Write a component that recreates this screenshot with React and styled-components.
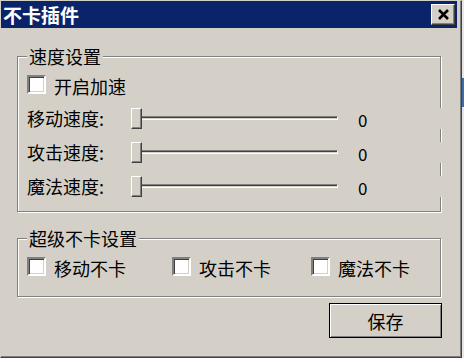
import React from "react";
import styled, { createGlobalStyle } from "styled-components";

const GlobalStyle = createGlobalStyle`
  html, body { margin: 0; padding: 0; }
  html {
    background: linear-gradient(to bottom, #e6e6e6 0, #e6e6e6 78px, #3a6ea5 78px, #3a6ea5 107px, #e6e6e6 107px);
  }
  body { font-family: "Noto Sans CJK SC", "Noto Sans", sans-serif; color: #000; }
`;

const Window = styled.div`
  width: 462px;
  height: 358px;
  box-sizing: border-box;
  background: #d4d0c8;
  border-top: 1px solid #d4d0c8;
  border-left: 1px solid #d4d0c8;
  border-right: 1px solid #404040;
  border-bottom: 1px solid #404040;
  box-shadow: inset -1px -1px 0 #808080;
  padding-right: 4px;
  display: flex;
  flex-direction: column;
`;

const TitleBar = styled.div`
  height: 27px;
  background: #0a246a;
  display: flex;
  align-items: center;
  justify-content: space-between;
  padding: 0 2px;
`;

const Title = styled.span`
  color: #fff;
  font-weight: 700;
  font-size: 19px;
  line-height: 27px;
`;

const CloseButton = styled.button`
  width: 24px;
  height: 21px;
  box-sizing: border-box;
  padding: 0;
  background: #d4d0c8;
  border: 1px solid;
  border-color: #fff #404040 #404040 #fff;
  box-shadow: inset -1px -1px 0 #808080;
  display: flex;
  align-items: center;
  justify-content: center;
`;

const Content = styled.div`
  padding: 28px 16px 0 16px;
  display: flex;
  flex-direction: column;
`;

const Group = styled.div`
  position: relative;
  border: 1px solid #808080;
  box-shadow: 1px 1px 0 #fff, inset 1px 1px 0 #fff;
  padding: 10px 0 ${(p) => p.$pb}px 9px;
  margin-top: ${(p) => p.$mt}px;
  display: flex;
  flex-direction: column;
`;

const Legend = styled.span`
  position: absolute;
  top: -10px;
  left: 9px;
  padding: 0 2px;
  background: #d4d0c8;
  font-size: 18px;
  line-height: 18px;
`;

const Row = styled.div`
  display: flex;
  align-items: center;
  height: 34px;
`;

const CheckItem = styled.label`
  display: flex;
  align-items: center;
  gap: 8px;
  width: ${(p) => (p.$w ? `${p.$w}px` : "auto")};
`;

const Box = styled.span`
  width: 19px;
  height: 19px;
  box-sizing: border-box;
  background: #fff;
  border: 2px solid;
  border-color: #808080 #fff #fff #808080;
  box-shadow: inset 1px 1px 0 #404040, inset -1px -1px 0 #d4d0c8;
`;

const Text = styled.span`
  font-size: 18px;
  line-height: 18px;
  padding-top: 3px;
`;

const FieldLabel = styled.span`
  width: 104px;
  font-size: 18px;
  line-height: 18px;
`;

const Slider = styled.div`
  flex: 1;
  height: 21px;
  margin-right: -3px;
  background: #d4d0c8;
  display: flex;
  align-items: center;
`;

const TrackArea = styled.div`
  position: relative;
  width: 207px;
  height: 21px;
  display: flex;
  align-items: center;
`;

const Track = styled.div`
  width: 100%;
  height: 4px;
  box-sizing: border-box;
  border-top: 1px solid #808080;
  border-left: 1px solid #808080;
  border-bottom: 1px solid #fff;
  border-right: 1px solid #fff;
  box-shadow: inset 0 1px 0 #404040;
`;

const Thumb = styled.div`
  position: absolute;
  left: 0;
  top: 0;
  width: 11px;
  height: 21px;
  box-sizing: border-box;
  background: #d4d0c8;
  border: 1px solid;
  border-color: #fff #404040 #404040 #fff;
  box-shadow: inset -1px -1px 0 #808080;
`;

const Value = styled.span`
  margin-left: 20px;
  font-size: 17px;
  line-height: 17px;
  padding-top: 3px;
`;

const Footer = styled.div`
  display: flex;
  justify-content: flex-end;
  margin-top: 6px;
  margin-right: -1px;
`;

const Button = styled.button`
  width: 113px;
  height: 35px;
  box-sizing: border-box;
  padding: 0;
  font-family: inherit;
  font-size: 18px;
  color: #000;
  background: #d4d0c8;
  border: 1px solid #000;
  box-shadow: inset 1px 1px 0 #fff, inset -1px -1px 0 #808080;
`;

const CloseIcon = () => (
  <svg width="13" height="11" viewBox="0 0 13 11">
    <path d="M2 1 L11 10 M11 1 L2 10" stroke="#000" strokeWidth="2.6" fill="none" />
  </svg>
);

const Check = ({ label, w }) => (
  <CheckItem $w={w}>
    <Box />
    <Text>{label}</Text>
  </CheckItem>
);

const SpeedRow = ({ label, value }) => (
  <Row>
    <FieldLabel>{label}</FieldLabel>
    <Slider>
      <TrackArea>
        <Track />
        <Thumb />
      </TrackArea>
      <Value>{value}</Value>
    </Slider>
  </Row>
);

export default function App() {
  return (
    <>
      <GlobalStyle />
      <Window>
        <TitleBar>
          <Title>不卡插件</Title>
          <CloseButton>
            <CloseIcon />
          </CloseButton>
        </TitleBar>
        <Content>
          <Group $pb={8} $mt={0}>
            <Legend>速度设置</Legend>
            <Row>
              <Check label="开启加速" />
            </Row>
            <SpeedRow label="移动速度:" value="0" />
            <SpeedRow label="攻击速度:" value="0" />
            <SpeedRow label="魔法速度:" value="0" />
          </Group>
          <Group $pb={13} $mt={26}>
            <Legend>超级不卡设置</Legend>
            <Row>
              <Check label="移动不卡" w={145} />
              <Check label="攻击不卡" w={139} />
              <Check label="魔法不卡" />
            </Row>
          </Group>
          <Footer>
            <Button>保存</Button>
          </Footer>
        </Content>
      </Window>
    </>
  );
}
